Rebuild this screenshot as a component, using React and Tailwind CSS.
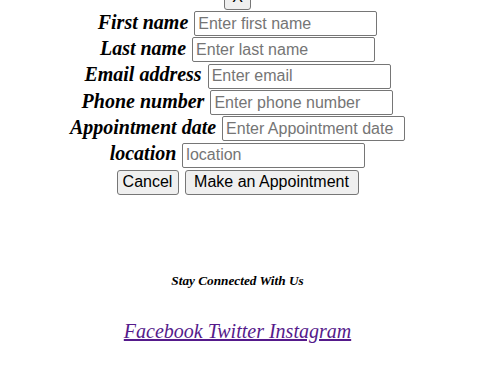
export default function App() {
  const rows = [
    { label: "First name", ph: "Enter first name" },
    { label: "Last name", ph: "Enter last name" },
    { label: "Email address", ph: "Enter email" },
    { label: "Phone number", ph: "Enter phone number" },
    { label: "Appointment date", ph: "Enter Appointment date" },
    { label: "location", ph: "location" },
  ];
  return (
    <div className="w-[475px] h-[365px] overflow-hidden bg-white text-black">
      <div className="flex justify-center">
        <button className="mt-[-15.5px] w-[27px] h-[25px] bg-[#efefef] border border-[#767676] rounded-[3px] text-[16px] leading-none text-black [font-family:'Liberation_Sans',sans-serif]">
          X
        </button>
      </div>
      <div className="mt-[1.2px] flex flex-col">
        {rows.map((r) => (
          <div
            key={r.label}
            className="h-[26.3px] flex justify-center items-baseline gap-[6px]"
          >
            <label className="text-[20px] leading-[23px] font-bold italic [font-family:'Liberation_Serif',serif]">
              {r.label}
            </label>
            <input
              placeholder={r.ph}
              className="w-[183px] h-[25px] border border-[#767676] rounded-[2px] px-[3px] py-0 text-[16px] text-black placeholder:text-[#757575] [font-family:'Liberation_Sans',sans-serif] outline-none"
            />
          </div>
        ))}
      </div>
      <div className="flex justify-center gap-[6px] mt-[1.5px]">
        <button className="h-[25px] w-[62px] bg-[#efefef] border border-[#767676] rounded-[3px] text-[16px] leading-none text-black [font-family:'Liberation_Sans',sans-serif]">
          Cancel
        </button>
        <button className="h-[25px] w-[174px] bg-[#efefef] border border-[#767676] rounded-[3px] text-[16px] leading-none text-black [font-family:'Liberation_Sans',sans-serif]">
          Make an Appointment
        </button>
      </div>
      <div className="text-center mt-[78px]">
        <h5 className="text-[13.28px] leading-[15.27px] font-bold italic [font-family:'Liberation_Serif',serif]">
          Stay Connected With Us
        </h5>
        <div className="mt-[31.3px] text-[20px] leading-[23px] italic [font-family:'Liberation_Serif',serif]">
          <a href="#" className="text-[#551a8b] underline">
            Facebook Twitter Instagram
          </a>
        </div>
      </div>
    </div>
  );
}
